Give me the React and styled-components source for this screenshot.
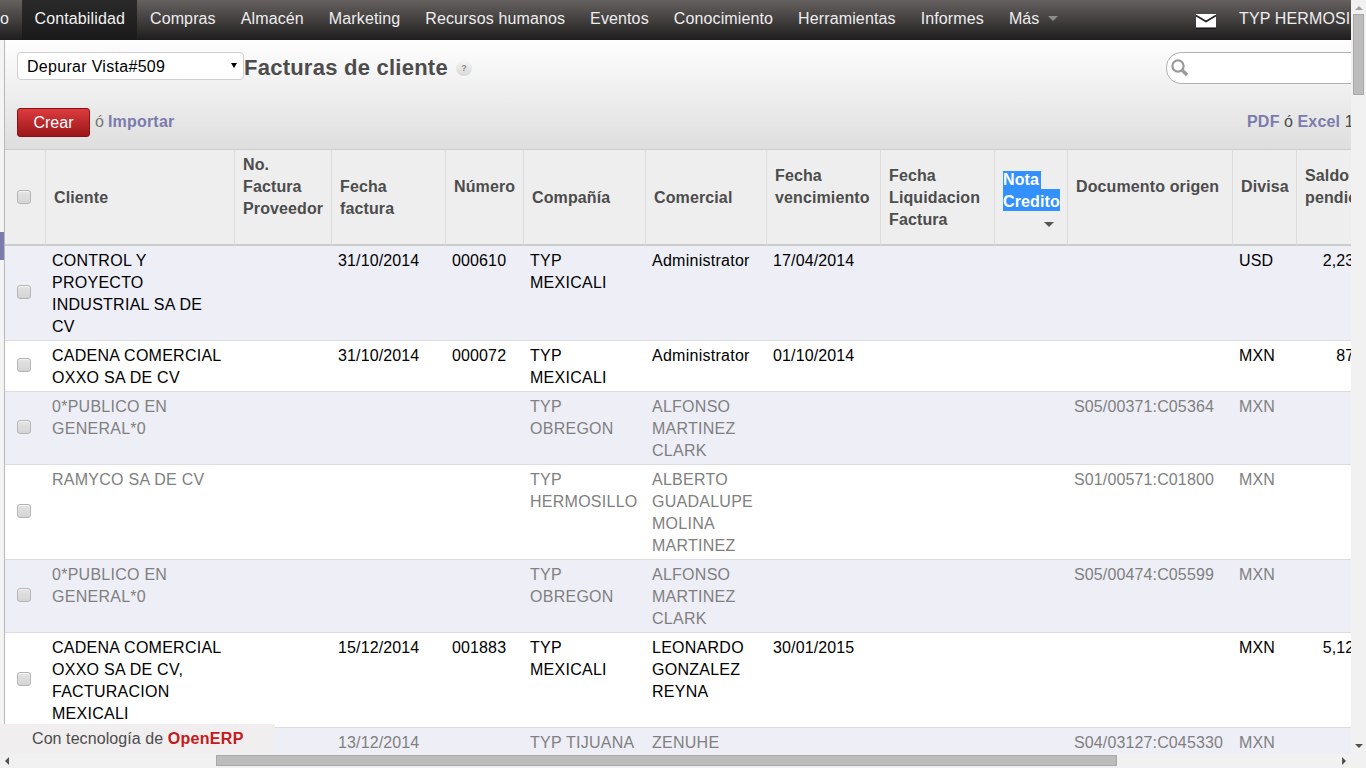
import React from 'react'
import styled, { createGlobalStyle } from "styled-components";

const Global = createGlobalStyle`
    html, body {
        margin: 0;
        padding: 0;
        overflow: hidden;
        background: #fff;
    }
    body {
        font-family: "Liberation Sans", Arial, sans-serif;
        font-size: 16px;
    }
`

const Screen = styled.div`
    width: 1366px;
    height: 768px;
    display: grid;
    grid-template-columns: 1351px 15px;
    grid-template-rows: 754px 14px;
    overflow: hidden;
`
const Main = styled.div`
    position: relative;
    display: flex;
    flex-direction: column;
    overflow: hidden;
    min-width: 0;
`
const Nav = styled.nav`
    flex: 0 0 40px;
    display: flex;
    align-items: stretch;
    overflow: hidden;
    white-space: nowrap;
    background: linear-gradient(#666161, #1f1d1d);
    color: #eeeeee;
    line-height: 37px;
    letter-spacing: 0.125px;
`
const NavItem = styled.a`
    padding: 0 12.5px;
    background: ${({ $active }) => $active ? "linear-gradient(#2b2a2a, #1a1a1a)" : "none"};
    color: ${({ $active }) => $active ? "#f2f2f2" : "#eeeeee"};
`
const NavClip = styled.a`
    width: 22px;
    flex: none;
`
const Caret = styled.span`
    display: inline-block;
    margin-left: 9px;
    vertical-align: 3px;
    border-left: 5px solid transparent;
    border-right: 5px solid transparent;
    border-top: 5px solid #8c8c8c;
`
const NavRight = styled.div`
    margin-left: auto;
    flex: 0 0 155px;
    display: flex;
    align-items: flex-start;
    gap: 23px;
    overflow: hidden;
`
const Mail = styled.svg`
    width: 20px;
    height: 14px;
    margin-top: 14px;
    flex: none;
    filter: drop-shadow(0 1px 0 #000);
`
const Body = styled.div`
    flex: 1;
    display: flex;
    min-height: 0;
`
const Strip = styled.div`
    flex: 0 0 4px;
    border-right: 1px solid #b8b8b8;
    background: #f4f4f4;
`
const StripMark = styled.div`
    margin-top: 192px;
    height: 28px;
    background: #7c7bad;
`
const Content = styled.div`
    flex: 1;
    min-width: 0;
    overflow: hidden;
`
const Toolbar = styled.div`
    height: 109px;
    box-sizing: border-box;
    padding: 12px 0 12px 12px;
    background: linear-gradient(#fefefe, #dedede);
    display: flex;
    flex-direction: column;
    gap: 24px;
`
const ToolRow = styled.div`
    display: flex;
    align-items: flex-start;
    white-space: nowrap;
`
const ViewSelect = styled.div`
    flex: 0 0 227px;
    box-sizing: border-box;
    height: 28px;
    padding: 1px 9px 0;
    display: flex;
    align-items: center;
    justify-content: space-between;
    background: #fff;
    border: 1px solid #cfcfcf;
    border-radius: 4px;
    color: #000;
    line-height: 26px;
    letter-spacing: 0.3px;
`
const SelectCaret = styled.span`
    margin-right: -3px;
    margin-top: -3px;
    border-left: 3.5px solid transparent;
    border-right: 3.5px solid transparent;
    border-top: 5px solid #000;
`
const Title = styled.h2`
    margin: 0;
    font-size: 22px;
    line-height: 32px;
    font-weight: 700;
    color: #4c4c4c;
    letter-spacing: 0.24px;
`
const Help = styled.span`
    flex: none;
    width: 16px;
    height: 16px;
    margin: 8px 0 0 8px;
    border-radius: 50%;
    background: linear-gradient(#f6f6f6, #d8d8d8);
    color: #8a8a8a;
    font-size: 9px;
    font-weight: 700;
    line-height: 16px;
    text-align: center;
`
const Search = styled.div`
    flex: 0 0 220px;
    box-sizing: border-box;
    height: 32px;
    margin-left: auto;
    margin-right: -35px;
    padding-left: 3px;
    display: flex;
    align-items: center;
    background: #fff;
    border: 1px solid #b0b0b0;
    border-radius: 15px;
`
const CreateButton = styled.button`
    width: 73px;
    height: 29px;
    padding: 0;
    background: linear-gradient(#dc3c3f, #9c1618);
    border: 1px solid #8a1214;
    border-radius: 3px;
    color: #fff;
    font: 16px "Liberation Sans", Arial, sans-serif;
`
const Or = styled.span`
    color: #777;
    margin: 0 4px 0 5px;
    line-height: 28px;
`
const LinkText = styled.a`
    color: #7c7bad;
    font-weight: 700;
    line-height: 28px;
    letter-spacing: 0.2px;
`
const Pager = styled.div`
    margin-left: auto;
    flex: none;
    width: 104px;
    line-height: 28px;
    color: #4c4c4c;
    overflow: hidden;
`
const Grid = styled.table`
    table-layout: fixed;
    width: 1388px;
    border-collapse: separate;
    border-spacing: 0;
    font-size: 16px;
    line-height: 22px;
`
const Col = styled.col`
    width: ${({ $w }) => $w}px;
`
const Head = styled.th`
    box-sizing: border-box;
    padding: 4px 7px 2px 8px;
    background: #eeeeee;
    border-top: 1px solid #cccccc;
    border-bottom: 2px solid #cccccc;
    border-left: ${({ $first }) => $first ? "none" : "1px solid #dddddd"};
    color: #4c4c4c;
    font-weight: 700;
    text-align: left;
    vertical-align: middle;
    letter-spacing: 0.12px;
    &::after {
        content: "";
        display: ${({ $trail }) => $trail ? "block" : "none"};
        height: 22px;
    }
`
const NoteHead = styled.div`
    display: flex;
    flex-direction: column;
    align-items: flex-start;
    margin-top: 2px;
`
const Picked = styled.span`
    background: #3390ff;
    color: #fff;
    line-height: 18px;
    padding: ${({ $pad }) => $pad ? "4px 0 0 0" : "0 2px 0 0"};
`
const SortCaret = styled.span`
    align-self: flex-end;
    margin: 11px 6px 0 0;
    border-left: 5px solid transparent;
    border-right: 5px solid transparent;
    border-top: 5px solid #555;
`
const Row = styled.tr`
    background: ${({ $odd }) => $odd ? "#eeeef7" : "#ffffff"};
    color: ${({ $muted }) => $muted ? "#808080" : "#000000"};
`
const Cell = styled.td`
    padding: 4px 7px 2px;
    border-bottom: 1px solid #dddddd;
    vertical-align: top;
    text-align: ${({ $right }) => $right ? "right" : "left"};
    overflow: ${({ $right }) => $right ? "visible" : "hidden"};
    letter-spacing: ${({ $caps }) => $caps ? "0.26px" : "0.13px"};
`
const CheckCell = styled.td`
    padding: 0;
    border-bottom: 1px solid #dddddd;
    vertical-align: middle;
    text-align: center;
    line-height: 0;
`
const HeadCheck = styled.div`
    line-height: 0;
    margin-left: -8px;
    width: 40px;
    text-align: center;
`
const Check = styled.input`
    appearance: none;
    width: 14px;
    height: 14px;
    margin: -2px 0 0 -2px;
    box-sizing: border-box;
    background: linear-gradient(#e4e4e4, #d4d4d4);
    border: 1px solid #b4b4b4;
    border-radius: 3px;
    box-shadow: inset 0 1px 1px #f4f4f4;
`
const Footer = styled.div`
    position: absolute;
    left: 0;
    bottom: 0;
    width: 275px;
    height: 30px;
    box-sizing: border-box;
    padding-left: 32px;
    background: #f0eeee;
    color: #4c4c4c;
    line-height: 29px;
    white-space: nowrap;
    letter-spacing: 0.08px;
`
const Brand = styled.b`
    color: #c41a1c;
    letter-spacing: 0.3px;
`
const VBar = styled.div`
    background: #f1f1f1;
    display: flex;
    flex-direction: column;
    align-items: center;
    padding-top: 6px;
    box-sizing: border-box;
`
const UpArrow = styled.span`
    border-left: 4px solid transparent;
    border-right: 4px solid transparent;
    border-bottom: 4px solid #a3a3a3;
`
const DownArrow = styled.span`
    margin-top: auto;
    margin-bottom: 6px;
    border-left: 4px solid transparent;
    border-right: 4px solid transparent;
    border-top: 4px solid #505050;
`
const VThumb = styled.div`
    width: 11px;
    height: 81px;
    margin-top: 4px;
    box-sizing: border-box;
    background: #bcbcbc;
    border: 1px solid #a8a8a8;
`
const HBar = styled.div`
    background: #f1f1f1;
    display: flex;
    align-items: flex-start;
    padding: 1px 5px 0;
    box-sizing: border-box;
`
const SideArrow = styled.span`
    margin-top: 2px;
    border-top: 4px solid transparent;
    border-bottom: 4px solid transparent;
    ${({ $right }) => $right ? "border-left: 4px solid #505050; margin-left: auto;" : "border-right: 4px solid #505050;"}
`
const HThumb = styled.div`
    width: 901px;
    height: 11px;
    margin-left: 207px;
    box-sizing: border-box;
    background: #bcbcbc;
    border: 1px solid #a8a8a8;
`
const Corner = styled.div`
    background: #f1f1f1;
`

const widths = [40, 189, 97, 114, 78, 122, 121, 114, 114, 73, 165, 64, 97]

const menu = ["Compras", "Almacén", "Marketing", "Recursos humanos", "Eventos", "Conocimiento", "Herramientas", "Informes"]

const rows = [
    { odd: true, cells: ["CONTROL Y PROYECTO INDUSTRIAL SA DE CV", "", "31/10/2014", "000610", "TYP MEXICALI", "Administrator", "17/04/2014", "", "", "", "USD", "2,230.00"] },
    { cells: ["CADENA COMERCIAL OXXO SA DE CV", "", "31/10/2014", "000072", "TYP MEXICALI", "Administrator", "01/10/2014", "", "", "", "MXN", "870.00"] },
    { odd: true, muted: true, cells: ["0*PUBLICO EN GENERAL*0", "", "", "", "TYP OBREGON", "ALFONSO MARTINEZ CLARK", "", "", "", "S05/00371:C05364", "MXN", ""] },
    { muted: true, cells: ["RAMYCO SA DE CV", "", "", "", "TYP HERMOSILLO", "ALBERTO GUADALUPE MOLINA MARTINEZ", "", "", "", "S01/00571:C01800", "MXN", ""] },
    { odd: true, muted: true, cells: ["0*PUBLICO EN GENERAL*0", "", "", "", "TYP OBREGON", "ALFONSO MARTINEZ CLARK", "", "", "", "S05/00474:C05599", "MXN", ""] },
    { cells: ["CADENA COMERCIAL OXXO SA DE CV, FACTURACION MEXICALI", "", "15/12/2014", "001883", "TYP MEXICALI", "LEONARDO GONZALEZ REYNA", "30/01/2015", "", "", "", "MXN", "5,120.00"] },
    { odd: true, muted: true, cells: ["", "", "13/12/2014", "", "TYP TIJUANA", "ZENUHE", "", "", "", "S04/03127:C045330", "MXN", ""] },
]

// the columns that run in capitals are wider in the reference
const capsCols = [0, 4, 5]

export default function App() {
    return (
        <>
            <Global />
            <Screen>
                <Main>
                    <Nav>
                        <NavClip>o</NavClip>
                        <NavItem $active>Contabilidad</NavItem>
                        {menu.map((m) => <NavItem key={m}>{m}</NavItem>)}
                        <NavItem>Más<Caret /></NavItem>
                        <NavRight>
                            <Mail viewBox="0 0 20 14">
                                <rect width="20" height="13.5" fill="#fff" />
                                <path d="M0 1.5 L10 7.5 L20 1.5" fill="none" stroke="#222" strokeWidth="1.6" />
                            </Mail>
                            <span>TYP HERMOSILLO</span>
                        </NavRight>
                    </Nav>
                    <Body>
                        <Strip><StripMark /></Strip>
                        <Content>
                            <Toolbar>
                                <ToolRow>
                                    <ViewSelect>Depurar Vista#509<SelectCaret /></ViewSelect>
                                    <Title>Facturas de cliente</Title>
                                    <Help>?</Help>
                                    <Search>
                                        <svg width="20" height="20" viewBox="0 0 20 20" fill="none" stroke="#9a9a9a" strokeWidth="2.2">
                                            <circle cx="8" cy="8" r="5.6" />
                                            <path d="M12 12 L17 17" strokeWidth="3.2" />
                                        </svg>
                                    </Search>
                                </ToolRow>
                                <ToolRow>
                                    <CreateButton>Crear</CreateButton>
                                    <Or>ó</Or>
                                    <LinkText>Importar</LinkText>
                                    <Pager>
                                        <LinkText>PDF</LinkText> ó <LinkText>Excel</LinkText> 1
                                    </Pager>
                                </ToolRow>
                            </Toolbar>
                            <Grid>
                                <colgroup>
                                    {widths.map((w, i) => <Col key={i} $w={w} />)}
                                </colgroup>
                                <thead>
                                    <tr>
                                        <Head $first><HeadCheck><Check type="checkbox" readOnly /></HeadCheck></Head>
                                        <Head>Cliente</Head>
                                        <Head $trail>No. Factura Proveedor</Head>
                                        <Head>Fecha factura</Head>
                                        <Head $trail>Número</Head>
                                        <Head>Compañía</Head>
                                        <Head>Comercial</Head>
                                        <Head $trail>Fecha vencimiento</Head>
                                        <Head>Fecha Liquidacion Factura</Head>
                                        <Head>
                                            <NoteHead>
                                                <Picked>Nota</Picked>
                                                <Picked $pad>Credito</Picked>
                                                <SortCaret />
                                            </NoteHead>
                                        </Head>
                                        <Head $trail>Documento origen</Head>
                                        <Head $trail>Divisa</Head>
                                        <Head $trail>Saldo pendiente</Head>
                                    </tr>
                                </thead>
                                <tbody>
                                    {rows.map((r, i) => (
                                        <Row key={i} $odd={r.odd} $muted={r.muted}>
                                            <CheckCell><Check type="checkbox" readOnly /></CheckCell>
                                            {r.cells.map((c, j) => <Cell key={j} $right={j === 11} $caps={capsCols.includes(j)}>{c}</Cell>)}
                                        </Row>
                                    ))}
                                </tbody>
                            </Grid>
                        </Content>
                    </Body>
                    <Footer>Con tecnología de <Brand>OpenERP</Brand></Footer>
                </Main>
                <VBar>
                    <UpArrow />
                    <VThumb />
                    <DownArrow />
                </VBar>
                <HBar>
                    <SideArrow />
                    <HThumb />
                    <SideArrow $right />
                </HBar>
                <Corner />
            </Screen>
        </>
    )
}
